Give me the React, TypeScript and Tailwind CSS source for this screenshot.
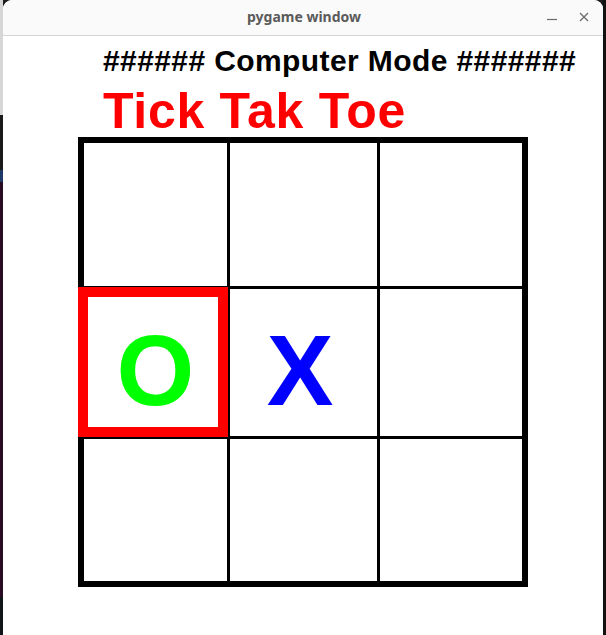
const board = ["", "", "", "O", "X", "", "", "", ""]

const Mark = ({ value }: { value: string }) => {
  if (value === "O") return <span className="text-[100px] leading-none font-bold text-[#00ff00] pt-[15px]">O</span>
  if (value === "X") return <span className="text-[100px] leading-none font-bold text-[#0000ff] pt-[15px] pr-[7px]">X</span>
  return null
}

const TitleBar = () => (
  <div className="h-[36px] bg-[#fafafa] border-b border-[#d4d4d4] rounded-t-[9px] flex items-center relative">
    <span className="flex-1 text-center text-[14px] font-bold text-[#5a5a5a] font-['Noto_Sans',sans-serif] pb-[2px] pl-[2px]">
      pygame window
    </span>
    <div className="absolute right-[13px] top-0 h-full flex items-center gap-[20px] pb-[2px]">
      <svg width="12" height="12" viewBox="0 0 12 12">
        <path d="M1 8.5h10" stroke="#6a6a6a" strokeWidth="1.2" />
      </svg>
      <svg width="12" height="12" viewBox="0 0 12 12">
        <path d="M2 2l8 8M10 2l-8 8" stroke="#6a6a6a" strokeWidth="1.3" />
      </svg>
    </div>
  </div>
)

export default function App() {
  return (
    <div className="w-[606px] h-[635px] flex bg-[#1c1c1c] overflow-hidden font-['Liberation_Sans',Arial,sans-serif]">
      <div className="w-[3px] flex flex-col">
        <div className="h-[115px] bg-[#d6d6d6]" />
        <div className="h-[55px] bg-[#1a1a1a]" />
        <div className="h-[12px] bg-[#1d3a66]" />
        <div className="h-[415px] bg-[#2a0b24]" />
        <div className="flex-1 bg-[#0f1518]" />
      </div>

      <div className="w-[600px] flex flex-col bg-white rounded-t-[9px]">
        <TitleBar />

        <div className="flex flex-col pt-[10px]">
          <h2 className="pl-[100px] text-[30px] leading-none font-bold text-black tracking-[0.4px]">
            ###### Computer Mode #######
          </h2>
          <h1 className="pl-[100px] mt-[10px] text-[50px] leading-none font-bold text-[#ff0000] tracking-[0.7px]">
            Tick Tak Toe
          </h1>

          <div className="ml-[75px] mt-[1px] w-[450px] h-[450px] relative border-[6px] border-black bg-black">
            <div className="grid grid-cols-[143px_147px_142px] grid-rows-[143px_147px_142px] gap-[3px] w-full h-full">
              {board.map((value, i) => (
                <div key={i} className="bg-white flex items-center justify-center">
                  <Mark value={value} />
                </div>
              ))}
            </div>
            <div className="absolute left-[-6px] top-[144px] w-[150px] h-[150px] border-[10px] border-[#ff0000]" />
          </div>
        </div>
      </div>

      <div className="w-[3px] bg-[#111111]" />
    </div>
  )
}
